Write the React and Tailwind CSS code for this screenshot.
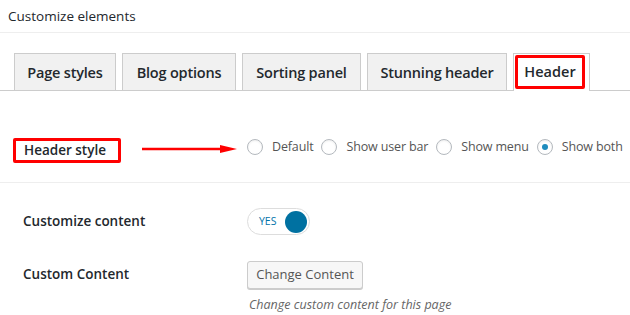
import React from 'react';

const tabs = [
  { label: 'Page styles', w: 'w-[102px]' },
  { label: 'Blog options', w: 'w-[114px]' },
  { label: 'Sorting panel', w: 'w-[119px]' },
  { label: 'Stunning header', w: 'w-[140px]' },
];

const radios = [
  { label: 'Default', checked: false },
  { label: 'Show user bar', checked: false },
  { label: 'Show menu', checked: false },
  { label: 'Show both', checked: true },
];

const Radio = ({ checked }) => (
  <span className="relative flex h-4 w-4 shrink-0 items-center justify-center rounded-full border border-[#b4b9be] bg-white shadow-[inset_0_1px_2px_rgba(0,0,0,0.07)]">
    {checked && <span className="h-[6px] w-[6px] rounded-full bg-[#1e8cbe]" />}
  </span>
);

const App = () => {
  return (
    <div className="h-[315px] w-[630px] overflow-hidden bg-white text-[#23282d] [font-family:'Open_Sans',sans-serif]">
      {/* title */}
      <div className="flex h-[33px] items-center border-b border-[#eee] px-2 text-[13.5px]">
        Customize elements
      </div>

      {/* tabs */}
      <div className="flex gap-[6px] border-b border-[#ccc] pl-[14px] pt-[20px]">
        {tabs.map((t) => (
          <div
            key={t.label}
            className={`${t.w} flex h-[37px] items-center justify-center border border-b-0 border-[#ccc] bg-[#f1f1f1] pt-[1px] text-[14.5px] font-semibold tracking-[-0.2px]`}
          >
            {t.label}
          </div>
        ))}
        <div className="-mb-px flex h-[38px] w-[77px] border border-b-0 border-[#ccc] bg-white pl-[1px] pr-[4px] pt-[1px] pb-[2px]">
          <div className="flex flex-1 items-center justify-center rounded-[2px] border-[3px] border-[#ff0000] text-[14.5px] font-semibold">
            Header
          </div>
        </div>
      </div>

      {/* header style row */}
      <div className="flex h-[92px] items-start border-b border-[#eee] pl-[13px] pt-[47px]">
        <div className="flex h-[25px] w-[108px] shrink-0 items-center rounded-[2px] border-[3px] border-[#ff0000] pl-[8px] text-[13.5px] font-semibold">
          Header style
        </div>
        <svg className="ml-[21px] mt-[5px] shrink-0" width="95" height="12" viewBox="0 0 95 12">
          <line x1="0" y1="6" x2="80" y2="6" stroke="#ff0000" strokeWidth="2.5" />
          <polygon points="78,2 95,6 78,10" fill="#ff0000" />
        </svg>
        <div className="ml-[10px] mt-[1px] flex h-4 shrink-0 items-center gap-[8px] whitespace-nowrap text-[12.5px] tracking-[-0.15px] text-[#555]">
          {radios.map((r) => (
            <label key={r.label} className="flex items-center gap-[9px]">
              <Radio checked={r.checked} />
              <span>{r.label}</span>
            </label>
          ))}
        </div>
      </div>

      {/* customize content */}
      <div className="flex items-center pl-[23px] pt-[25px]">
        <div className="w-[224px] text-[13.5px] font-semibold">Customize content</div>
        <div className="flex h-[27px] w-[63px] items-center justify-between rounded-full border border-[#ddd] bg-white pl-[11px] pr-[2px]">
          <span className="text-[10.5px] text-[#0073aa]">YES</span>
          <span className="h-[22px] w-[22px] rounded-full bg-[#0071a1]" />
        </div>
      </div>

      {/* custom content */}
      <div className="flex items-start pl-[23px] pt-[26px]">
        <div className="mt-[3px] w-[224px] text-[13.5px] font-semibold">Custom Content</div>
        <div className="flex flex-col">
          <button className="flex h-[28px] w-[116px] items-center justify-center rounded-[3px] border border-[#ccc] bg-[#f7f7f7] text-[13px] text-[#555] shadow-[0_1px_0_#ccc]">
            Change Content
          </button>
          <p className="mt-[7px] pl-[2px] text-[12.5px] italic text-[#666]">
            Change custom content for this page
          </p>
        </div>
      </div>
    </div>
  );
};

export default App;
